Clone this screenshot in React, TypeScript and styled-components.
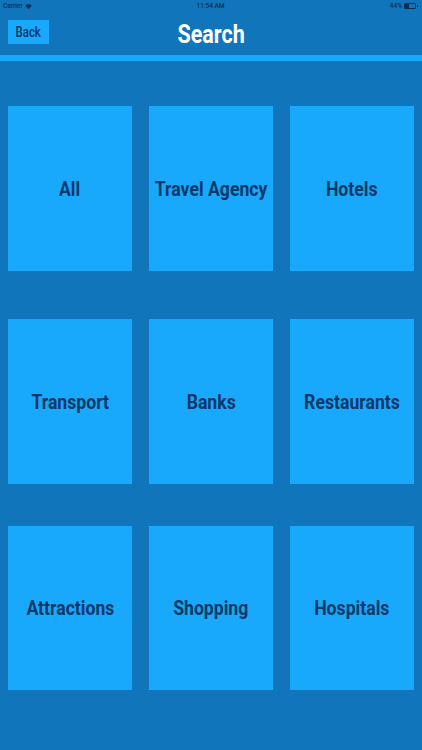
import React from "react";
import styled, { createGlobalStyle } from "styled-components";

const Global = createGlobalStyle`
  html, body { margin: 0; padding: 0; }
  body { background: #1175bb; font-family: Roboto, "Liberation Sans", sans-serif; }
`;

const Page = styled.div`
  width: 422px;
  height: 750px;
  background: #1175bb;
  display: flex;
  flex-direction: column;
  overflow: hidden;
`;

const StatusBar = styled.div`
  height: 12px;
  display: grid;
  grid-template-columns: 1fr auto 1fr;
  align-items: center;
  padding: 0 4px 0 3px;
  font-size: 6.5px;
  font-weight: 500;
  color: #0c2f55;
`;

const StatusLeft = styled.div`
  display: flex;
  align-items: center;
  gap: 2px;
`;

const StatusRight = styled.div`
  display: flex;
  align-items: center;
  justify-content: flex-end;
  gap: 2px;
`;

const Battery = styled.div`
  width: 10px;
  height: 4px;
  border: 1px solid #0c2f55;
  border-radius: 1px;
  position: relative;
  margin-right: 2px;
  &::before {
    content: "";
    position: absolute;
    left: 0;
    top: 0;
    bottom: 0;
    width: 44%;
    background: #0c2f55;
  }
  &::after {
    content: "";
    position: absolute;
    right: -3px;
    top: 1px;
    width: 1px;
    height: 2px;
    background: #0c2f55;
  }
`;

const Header = styled.div`
  height: 43px;
  position: relative;
  display: flex;
  align-items: center;
  justify-content: center;
`;

const Squeeze = styled.span<{ $sx: number }>`
  display: inline-block;
  transform: scaleX(${(p) => p.$sx});
  white-space: nowrap;
`;

const BackButton = styled.button`
  position: absolute;
  left: 8px;
  top: 8px;
  width: 41px;
  height: 24px;
  border: none;
  padding: 0;
  background: #18a9fc;
  color: #0c3867;
  font-family: Roboto, "Liberation Sans", sans-serif;
  font-size: 15.5px;
  font-weight: 500;
  display: flex;
  align-items: center;
  justify-content: center;
`;

const Title = styled.h1`
  margin: 0;
  margin-top: 2px;
  color: #ffffff;
  font-size: 25px;
  font-weight: 700;
`;

const Stripe = styled.div`
  height: 6px;
  background: #18a9fc;
`;

const Grid = styled.div`
  display: flex;
  flex-direction: column;
  padding-left: 8px;
`;

const Row = styled.div<{ $top: number; $h: number }>`
  display: grid;
  grid-template-columns: repeat(3, 124px);
  column-gap: 17px;
  margin-top: ${(p) => p.$top}px;
  height: ${(p) => p.$h}px;
`;

const Tile = styled.button`
  border: none;
  padding: 0;
  background: #18a9fc;
  color: #0c3867;
  font-family: Roboto, "Liberation Sans", sans-serif;
  font-size: 21px;
  font-weight: 700;
  display: flex;
  align-items: center;
  justify-content: center;
  white-space: nowrap;
  overflow: visible;
`;

const rows: { top: number; h: number; items: string[] }[] = [
  { top: 45, h: 165, items: ["All", "Travel Agency", "Hotels"] },
  { top: 48, h: 165, items: ["Transport", "Banks", "Restaurants"] },
  { top: 42, h: 164, items: ["Attractions", "Shopping", "Hospitals"] },
];

export default function App() {
  return (
    <Page>
      <Global />
      <StatusBar>
        <StatusLeft>
          Carrier
          <svg width="7" height="5" viewBox="0 0 14 10">
            <path d="M7 10 L0.5 3.5 A9 9 0 0 1 13.5 3.5 Z" fill="#0c2f55" />
          </svg>
        </StatusLeft>
        <div>11:54 AM</div>
        <StatusRight>
          44%
          <Battery />
        </StatusRight>
      </StatusBar>
      <Header>
        <BackButton>
          <Squeeze $sx={0.74}>Back</Squeeze>
        </BackButton>
        <Title>
          <Squeeze $sx={0.86}>Search</Squeeze>
        </Title>
      </Header>
      <Stripe />
      <Grid>
        {rows.map((r, i) => (
          <Row key={i} $top={r.top} $h={r.h}>
            {r.items.map((t) => (
              <Tile key={t}>
                <Squeeze $sx={0.84}>{t}</Squeeze>
              </Tile>
            ))}
          </Row>
        ))}
      </Grid>
    </Page>
  );
}
